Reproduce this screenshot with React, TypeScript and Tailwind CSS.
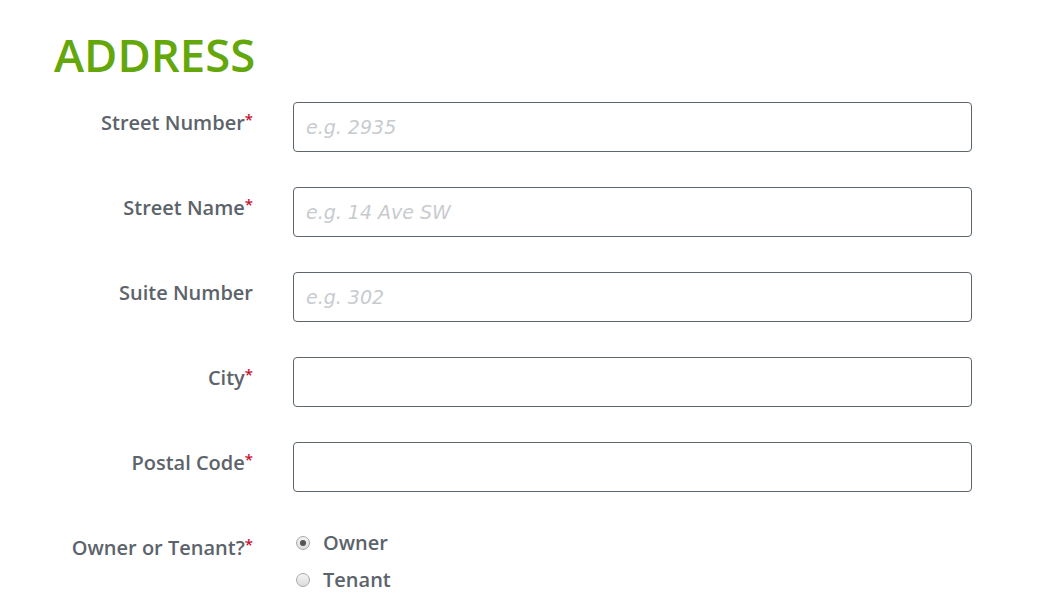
import React from 'react';

const fields = [
  { label: 'Street Number', required: true, placeholder: 'e.g. 2935' },
  { label: 'Street Name', required: true, placeholder: 'e.g. 14 Ave SW' },
  { label: 'Suite Number', required: false, placeholder: 'e.g. 302' },
  { label: 'City', required: true, placeholder: '' },
  { label: 'Postal Code', required: true, placeholder: '' },
];

function Radio({ checked, label }: { checked?: boolean; label: string }) {
  return (
    <label className="flex items-center gap-[13px] h-[37px]">
      <span className="w-[14px] h-[14px] rounded-full border border-[#a9a9a9] bg-gradient-to-b from-[#f4f4f4] to-[#dcdcdc] flex items-center justify-center">
        {checked && <span className="w-[6px] h-[6px] rounded-full bg-[#555]" />}
      </span>
      <span className="text-[20px] font-semibold text-[#5c636b]">{label}</span>
    </label>
  );
}

export default function App() {
  return (
    <div className="bg-white w-[1044px] h-[610px] overflow-hidden font-['Open_Sans',sans-serif]">
      <h1 className="pl-[54px] pt-[26px] text-[45.5px] leading-[56px] font-semibold text-[#64a70b]">ADDRESS</h1>
      <div className="mt-[20px] flex flex-col gap-[35px]">
        {fields.map((f) => (
          <div key={f.label} className="flex">
            <div className="w-[253px] text-right text-[20px] font-semibold text-[#5c636b] pt-[6px]">
              {f.label}
              {f.required && <span className="text-[#c8102e] text-[15px] align-top">*</span>}
            </div>
            <input
              type="text"
              placeholder={f.placeholder}
              className="ml-[40px] w-[679px] h-[50px] border border-[#5f656c] rounded-[4px] px-[12px] text-[19px] italic font-['DejaVu_Sans',sans-serif] placeholder:text-[#c8cbce] outline-none"
            />
          </div>
        ))}
        <div className="flex">
          <div className="w-[253px] text-right text-[20px] font-semibold text-[#5c636b] pt-[6px]">
            Owner or Tenant?<span className="text-[#c8102e] text-[15px] align-top">*</span>
          </div>
          <div className="ml-[43px] flex flex-col -mt-[3px]">
            <Radio checked label="Owner" />
            <Radio label="Tenant" />
          </div>
        </div>
      </div>
    </div>
  );
}
